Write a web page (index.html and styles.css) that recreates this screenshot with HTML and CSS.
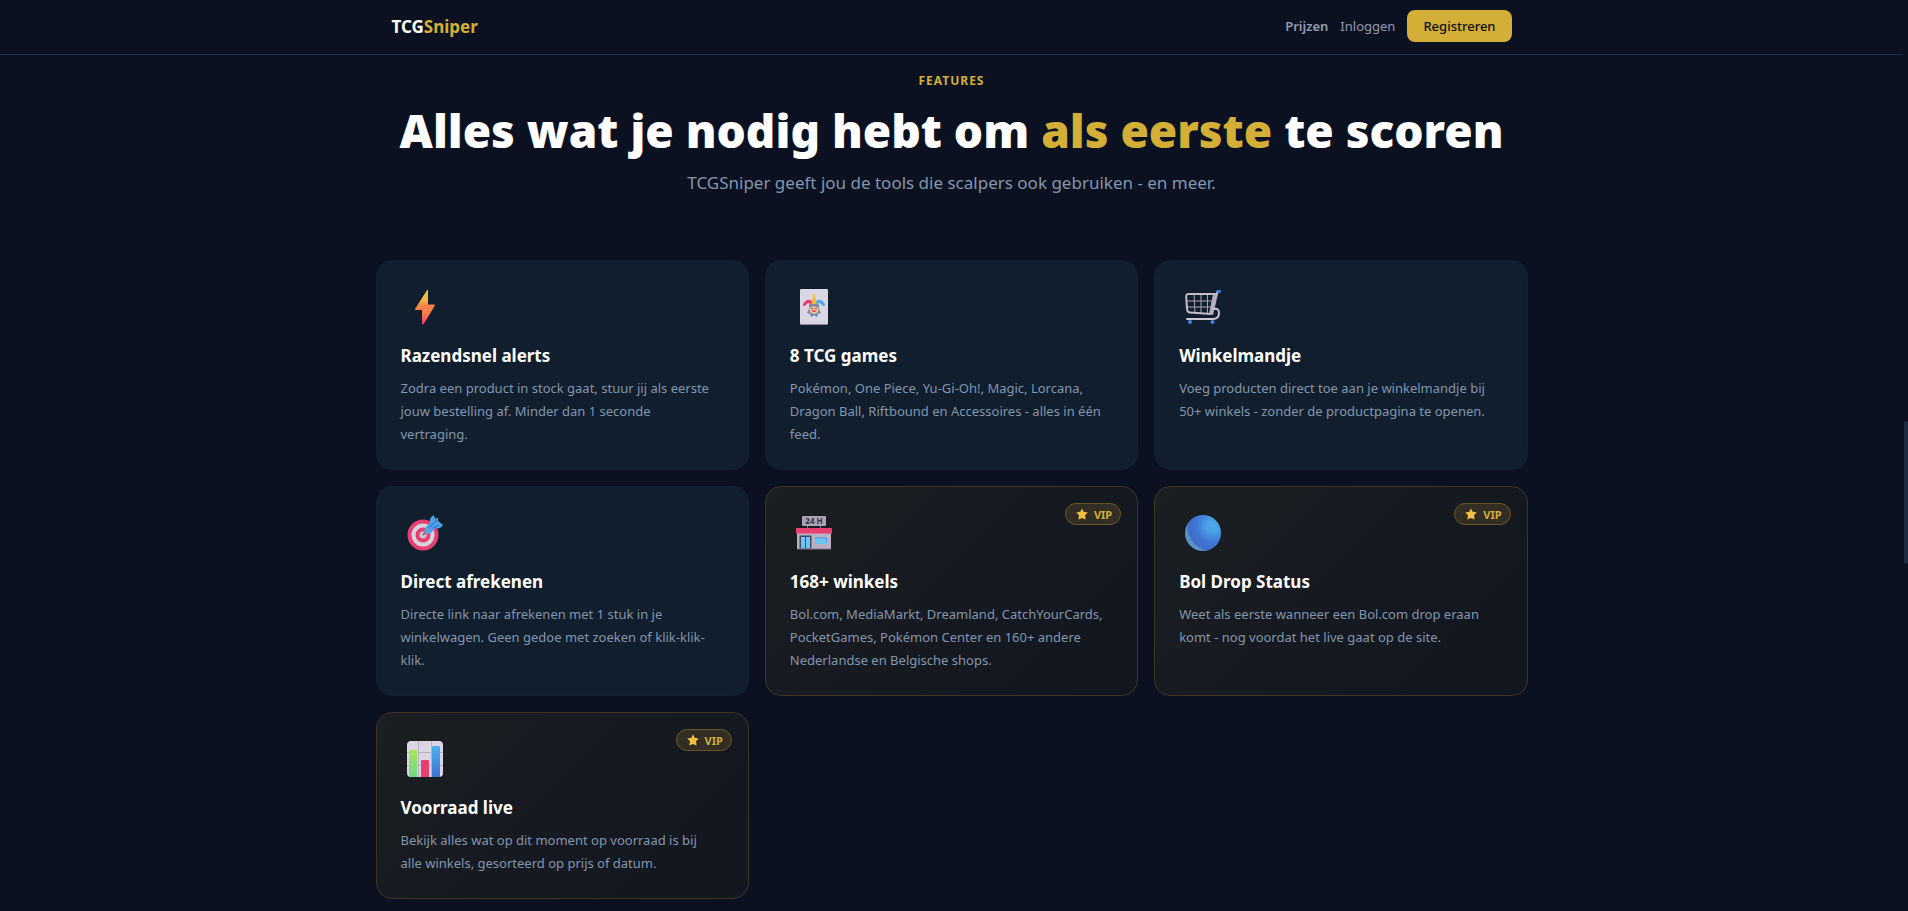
FILE: index.html
```
<!DOCTYPE html>
<html lang="nl">
<head>
  <meta charset="UTF-8">
  <meta name="viewport" content="width=device-width, initial-scale=1.0">
  <title>TCGSniper</title>
  <link rel="stylesheet" href="styles.css">
</head>
<body>
  <header class="navbar">
    <div class="navbar-inner">
      <a href="#" class="logo">TCG<span>Sniper</span></a>
      <nav class="nav-links">
        <a href="#" class="nav-strong">Prijzen</a>
        <a href="#">Inloggen</a>
        <button type="button" class="btn-register">Registreren</button>
      </nav>
    </div>
  </header>

  <main class="features">
    <div class="section-head">
      <div class="eyebrow">Features</div>
      <h2>Alles wat je nodig hebt om <span>als eerste</span> te scoren</h2>
      <p>TCGSniper geeft jou de tools die scalpers ook gebruiken - en meer.</p>
    </div>

    <div class="grid">
      <div class="card">
        <div class="icon">
          <svg viewBox="0 0 36 36">
            <defs>
              <linearGradient id="bolt" x1="0" y1="0" x2="0" y2="1">
                <stop offset="0" stop-color="#f5c83c"/>
                <stop offset=".3" stop-color="#f3b540"/>
                <stop offset=".45" stop-color="#fb8449"/>
                <stop offset=".7" stop-color="#fa7a4c"/>
                <stop offset="1" stop-color="#e8326e"/>
              </linearGradient>
            </defs>
            <path fill="url(#bolt)" d="M20 1.2Q21 .2 21 1.6V15.6H27Q28.4 15.6 27.6 17L17 34.8Q15 36.6 15 34.4V21H9Q7.400 21 8.300 19.400Z"/>
          </svg>
        </div>
        <h3>Razendsnel alerts</h3>
        <p>Zodra een product in stock gaat, stuur jij als eerste jouw bestelling af. Minder dan 1 seconde vertraging.</p>
      </div>

      <div class="card">
        <div class="icon">
          <svg viewBox="0 0 36 36">
            <rect x="4" y="1" width="28" height="35" rx="1" fill="#8f879e"/>
            <rect x="4" y="0" width="28" height="35" rx="1" fill="#dcd7e4"/>
            <path fill="none" stroke="#c9c3d4" stroke-dasharray="1 2" d="M6.500 3V33H31"/>
            <path fill="#7e86a3" d="M11 24L14 18H22L25 24L21 25H15Z"/>
            <path fill="#4f8ab0" d="M14 24H22L21 28L18 26L15 28Z"/>
            <path fill="none" stroke="#e63f70" stroke-width="3" d="M15 17V13Q11 11 9 15"/>
            <path fill="none" stroke="#4da7e8" stroke-width="3" d="M21 17V13Q25 11 27 15"/>
            <circle cx="8.500" cy="15.500" r="1.500" fill="#e63f70"/>
            <circle cx="27.500" cy="15.500" r="1.500" fill="#4da7e8"/>
            <path fill="#f0bd35" d="M15 16L17 8H19L21 16Z"/>
            <circle cx="18" cy="6.800" r="1.500" fill="#f5c83c"/>
            <circle cx="18" cy="20.500" r="4.500" fill="#f3bd96"/>
            <path fill="#7e86a3" d="M13 19V16Q18 13.500 23 16V19Q18 15.500 13 19Z"/>
            <circle cx="16" cy="19.500" r=".7" fill="#5a3b46"/>
            <circle cx="20" cy="19.500" r=".7" fill="#5a3b46"/>
            <path fill="#e0355f" d="M15.500 21.500H20.500Q18 24.500 15.500 21.500Z"/>
          </svg>
        </div>
        <h3>8 TCG games</h3>
        <p>Pokémon, One Piece, Yu-Gi-Oh!, Magic, Lorcana, Dragon Ball, Riftbound en Accessoires - alles in één feed.</p>
      </div>

      <div class="card">
        <div class="icon">
          <svg viewBox="0 0 36 36">
            <path fill="none" stroke="#a9a2b3" stroke-width="1" d="M2 12H29M2 18H28M9 5L10 24M16 5V24M22.500 5V24"/>
            <path fill="none" stroke="#c3bccb" stroke-width="2" stroke-linejoin="round" d="M31 5H3.500Q1 5 1.200 8L2 20Q2.300 23.500 5 23.500L26 25"/>
            <path fill="#b5aebd" d="M28 5H33L28 26L24 25Z"/>
            <path fill="none" stroke="#cdc6d6" stroke-width="2" stroke-linecap="round" d="M29 20Q34 19 34 24Q34 30 28 30H2"/>
            <path stroke="#3f83dc" stroke-width="3" stroke-linecap="round" d="M32.500 2.500H34.500"/>
            <path stroke="#c3bccb" stroke-width="2" d="M31 6L32.500 3.500"/>
            <circle cx="5" cy="33" r="2" fill="#3f83dc"/>
            <circle cx="27.500" cy="33" r="2" fill="#3f83dc"/>
          </svg>
        </div>
        <h3>Winkelmandje</h3>
        <p>Voeg producten direct toe aan je winkelmandje bij 50+ winkels - zonder de productpagina te openen.</p>
      </div>

      <div class="card">
        <div class="icon">
          <svg viewBox="0 0 36 36">
            <circle cx="16" cy="20" r="15.500" fill="#e63f70"/>
            <circle cx="16" cy="20" r="11.500" fill="#d9d3e0"/>
            <circle cx="16" cy="20" r="7.500" fill="#e63f70"/>
            <circle cx="16" cy="20" r="3.500" fill="#cdc6d6"/>
            <path stroke="#777184" stroke-width="2" d="M16 20L20 16"/>
            <path fill="#4da3e6" d="M17.500 17.500Q17 13 20 11L23 8Q22 3 26.500 0L28.500 4L31 2.500L31 6L36 10Q33 14.500 28.500 13L25 17Q22 20 17.500 17.500Z"/>
            <path stroke="#347fd6" stroke-width="1.500" d="M23 12L30 5M26 13L32 10"/>
            <path fill="#8ccbf6" d="M20 14h1v1h-1zM22 16h1v1h-1zM20 17h1v1h-1z"/>
          </svg>
        </div>
        <h3>Direct afrekenen</h3>
        <p>Directe link naar afrekenen met 1 stuk in je winkelwagen. Geen gedoe met zoeken of klik-klik-klik.</p>
      </div>

      <div class="card vip">
        <div class="badge">
          <svg viewBox="0 0 12 12"><path d="M6 .4L7.700 3.800L11.700 4.500L9 7.300L9.600 11.500L6 10L2.400 11.500L3 7.300L.3 4.500L4.300 3.800Z"/></svg>
          VIP
        </div>
        <div class="icon">
          <svg viewBox="0 0 36 36">
            <rect x="6" y="1" width="24" height="10" rx="1" fill="#aaa3b5"/>
            <path fill="#7e788c" d="M11 11h1v2h-1zM24 11h1v2h-1z"/>
            <text x="18" y="9" class="sign">24 H</text>
            <rect x="1" y="17" width="34" height="17" fill="#b9b2c2"/>
            <rect x="0" y="13" width="36" height="5.500" fill="#e63f70"/>
            <rect x="3.500" y="20.500" width="12" height="13" fill="#47465f"/>
            <path fill="#6cc5f2" d="M5 22h4v11H5zM10 22h4v11h-4z"/>
            <rect x="19" y="22.500" width="12" height="6.500" fill="#6cc5f2"/>
            <path fill="none" stroke="#4797dd" d="M19 23H30.500V28"/>
            <path fill="#7e788c" d="M1 33.500h34v1H1z"/>
          </svg>
        </div>
        <h3>168+ winkels</h3>
        <p>Bol.com, MediaMarkt, Dreamland, CatchYourCards, PocketGames, Pokémon Center en 160+ andere Nederlandse en Belgische shops.</p>
      </div>

      <div class="card vip">
        <div class="badge">
          <svg viewBox="0 0 12 12"><path d="M6 .4L7.700 3.800L11.700 4.500L9 7.300L9.600 11.500L6 10L2.400 11.500L3 7.300L.3 4.500L4.300 3.800Z"/></svg>
          VIP
        </div>
        <div class="icon">
          <svg viewBox="0 0 36 36">
            <defs>
              <radialGradient id="ball" cx=".78" cy=".3" r=".75">
                <stop offset="0" stop-color="#4fa9ea"/>
                <stop offset=".25" stop-color="#4a9fe6"/>
                <stop offset=".6" stop-color="#4079d6"/>
                <stop offset=".9" stop-color="#3f6bc9"/>
                <stop offset="1" stop-color="#5b93c8"/>
              </radialGradient>
            </defs>
            <circle cx="18" cy="18" r="18" fill="url(#ball)"/>
          </svg>
        </div>
        <h3>Bol Drop Status</h3>
        <p>Weet als eerste wanneer een Bol.com drop eraan komt - nog voordat het live gaat op de site.</p>
      </div>

      <div class="card vip">
        <div class="badge">
          <svg viewBox="0 0 12 12"><path d="M6 .4L7.700 3.800L11.700 4.500L9 7.300L9.600 11.500L6 10L2.400 11.500L3 7.300L.3 4.500L4.300 3.800Z"/></svg>
          VIP
        </div>
        <div class="icon">
          <svg viewBox="0 0 36 36">
            <defs>
              <linearGradient id="barGreen" x1="0" y1="0" x2="0" y2="1">
                <stop offset="0" stop-color="#a8e65c"/>
                <stop offset="1" stop-color="#6fd585"/>
              </linearGradient>
              <linearGradient id="barBlue" x1="0" y1="0" x2="0" y2="1">
                <stop offset="0" stop-color="#4bb0ee"/>
                <stop offset="1" stop-color="#3f72d0"/>
              </linearGradient>
            </defs>
            <rect width="36" height="36" rx="4" fill="#dbd6e3"/>
            <path stroke="#b7b0c2" d="M11.500 0V36M24.500 0V36M0 11.500H36M0 24.500H36"/>
            <path fill="url(#barGreen)" d="M2 10Q2 9 3 9H9Q10 9 10 10V36H4Q2 36 2 33Z"/>
            <path fill="#e63f70" d="M14 20Q14 19 15 19H21Q22 19 22 20V36H14Z"/>
            <path fill="url(#barBlue)" d="M25 6Q25 5 26 5H32Q33 5 33 6V36H25Z"/>
          </svg>
        </div>
        <h3>Voorraad live</h3>
        <p>Bekijk alles wat op dit moment op voorraad is bij alle winkels, gesorteerd op prijs of datum.</p>
      </div>
    </div>
  </main>

  <div class="scroll-thumb"></div>
</body>
</html>
```
FILE: styles.css
```
* {
    box-sizing: border-box;
    margin: 0;
    padding: 0;
}

body {
    font-family: "Noto Sans", "Open Sans", sans-serif;
    background-color: #0b1120;
    color: #fff;
    padding-right: 5px;
}

a {
    text-decoration: none;
    color: inherit;
}

/* navbar */
.navbar {
    border-bottom: 1px solid #1e2d40;
}

.navbar-inner {
    max-width: 1152px;
    height: 54px;
    margin: 0 auto;
    padding: 0 16px 2px;
    display: flex;
    justify-content: space-between;
    align-items: center;
}

.logo {
    font-size: 17px;
    font-weight: 700;
}

.logo span,
h2 span {
    color: #d4af37;
}

.nav-links {
    display: flex;
    align-items: center;
    gap: 12px;
    font-size: 13px;
    color: #9499b3;
}

.nav-strong {
    font-weight: 600;
}

.btn-register {
    height: 32px;
    padding: 0 16px;
    border: none;
    border-radius: 8px;
    background-color: #d4af37;
    color: #0a0a0a;
    font-family: inherit;
    font-size: 13px;
    font-weight: 500;
    cursor: pointer;
}

/* features */
.features {
    max-width: 1152px;
    margin: 0 auto;
    padding: 18px 0 11px;
}

.section-head {
    text-align: center;
    margin-bottom: 63px;
}

.eyebrow {
    font-size: 12px;
    line-height: 16px;
    font-weight: 700;
    letter-spacing: 1px;
    text-transform: uppercase;
    color: #d4af37;
    margin-bottom: 13px;
}

h2 {
    font-size: 46px;
    line-height: 56px;
    font-weight: 900;
    margin-bottom: 11px;
}

.section-head p {
    font-size: 17px;
    line-height: 28px;
    color: #8496ad;
}

.grid {
    display: grid;
    grid-template-columns: repeat(3, 1fr);
    gap: 16px;
}

.card {
    position: relative;
    padding: 24px 24px 23px;
    border: 1px solid #112131;
    border-radius: 16px;
    background-color: #101e2e;
}

.card.vip {
    border-color: #3d3624;
    background: linear-gradient(135deg, #1c1f20 0%, #171a21 40%, #11161f 100%);
}

.icon {
    width: 48px;
    height: 44px;
    margin-bottom: 14px;
    display: flex;
    align-items: center;
    justify-content: center;
}

.icon svg {
    width: 36px;
    height: 36px;
}

.sign {
    font-size: 8px;
    font-weight: 700;
    text-anchor: middle;
    fill: #33324a;
}

h3 {
    font-size: 17px;
    line-height: 25px;
    font-weight: 700;
    margin-bottom: 9px;
}

.card p {
    font-size: 13px;
    line-height: 23px;
    padding-right: 6px;
    color: #8496ad;
}

.badge {
    position: absolute;
    top: 16px;
    right: 16px;
    height: 22px;
    padding: 0 8px 0 10px;
    display: flex;
    align-items: center;
    gap: 6px;
    border: 1px solid #6b5424;
    border-radius: 11px;
    background-color: #322e23;
    color: #d4af37;
    font-size: 11px;
    font-weight: 700;
}

.badge svg {
    width: 12px;
    height: 12px;
    fill: #f0c040;
}

.scroll-thumb {
    position: fixed;
    right: 0;
    top: 421px;
    width: 4px;
    height: 143px;
    border-radius: 3px;
    background-color: #1e2d40;
}

@media (max-width: 900px) {
    .grid {
        grid-template-columns: 1fr;
    }
}
```
